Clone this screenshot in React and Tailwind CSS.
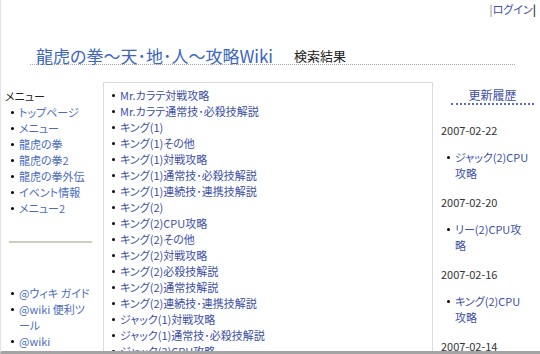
import React from 'react';

const menu = ['トップページ', 'メニュー', '龍虎の拳', '龍虎の拳2', '龍虎の拳外伝', 'イベント情報', 'メニュー2'];
const tools = ['@ウィキ ガイド', '@wiki 便利ツール', '@wiki'];

const results = [
  'Mr.カラテ対戦攻略',
  'Mr.カラテ通常技･必殺技解説',
  'キング(1)',
  'キング(1)その他',
  'キング(1)対戦攻略',
  'キング(1)通常技･必殺技解説',
  'キング(1)連続技･連携技解説',
  'キング(2)',
  'キング(2)CPU攻略',
  'キング(2)その他',
  'キング(2)対戦攻略',
  'キング(2)必殺技解説',
  'キング(2)通常技解説',
  'キング(2)連続技･連携技解説',
  'ジャック(1)対戦攻略',
  'ジャック(1)通常技･必殺技解説',
  'ジャック(2)CPU攻略',
];

// wrapped the way the original narrow column wraps them
const recent = [
  { date: '2007-02-22', lines: ['ジャック(2)CPU', '攻略'] },
  { date: '2007-02-20', lines: ['リー(2)CPU攻', '略'] },
  { date: '2007-02-16', lines: ['キング(2)CPU', '攻略'] },
  { date: '2007-02-14', lines: ['ジャック(1)通常', '技･必殺技解説'] },
];

const font = { fontFamily: '"Noto Sans CJK JP", "Liberation Sans", sans-serif', fontFeatureSettings: '"palt"' };

function Bullet({ children, className = '' }) {
  return (
    <li className={`flex ${className}`}>
      <span className="w-[8px] shrink-0 flex items-start pt-[7px]">
        <span className="block w-[3px] h-[3px] rounded-full bg-black" />
      </span>
      <span className="min-w-0">{children}</span>
    </li>
  );
}

export default function App() {
  return (
    <div className="w-[540px] h-[354px] overflow-hidden bg-white border-l border-[#e4e4e4] border-b-[3px] border-b-[#a4a4a4] text-[#333] text-[11px] leading-[16px]" style={font}>
      {/* header */}
      <div className="flex justify-end pr-[4px] pt-[1px] h-[16px]">
        <span className="text-[#777]">|</span>
        <a className="text-[#3c4ea6]">ログイン</a>
        <span className="text-[#333] font-bold">|</span>
      </div>
      <div className="ml-[29px] w-[485px] mt-[32px] border-b border-dotted border-[#aaa] flex items-end">
        <h1 className="pl-[6px] text-[17px] leading-[16px] text-[#3a66c0]">龍虎の拳～天･地･人～攻略Wiki</h1>
        <span className="ml-[21px] text-[13px] leading-[16px] text-[#222]">検索結果</span>
      </div>

      <div className="flex mt-[17px]">
        {/* left menu */}
        <div className="w-[102px] shrink-0 pt-[6px]">
          <div className="pl-[4px] text-[#222]">メニュー</div>
          <ul className="pl-[10px] text-[#4a6bc0]">
            {menu.map((m) => (
              <Bullet key={m}>{m}</Bullet>
            ))}
          </ul>
          <div className="ml-[8px] w-[83px] h-[2px] bg-[#cfccc2] mt-[25px] mb-[42px]" />
          <ul className="pl-[10px] pr-[10px] text-[#4a6bc0]">
            {tools.map((t) => (
              <Bullet key={t}>{t}</Bullet>
            ))}
          </ul>
        </div>

        {/* search results */}
        <div className="w-[330px] shrink-0 h-[300px] border-l border-t border-r border-[#dcdcdc] pt-[4px] pl-[8px]">
          <ul className="text-[#3c4ea6]">
            {results.map((r) => (
              <Bullet key={r}>{r}</Bullet>
            ))}
          </ul>
        </div>

        {/* recent */}
        <div className="flex-1 pl-[8px] pr-[6px] pt-[5px]">
          <div className="ml-[10px] text-center text-[12px] leading-[16px] text-[#3c4ea6] border-b-2 border-dotted border-[#5a6cc0]">更新履歴</div>
          <div className="pt-[4px]">
            {recent.map((r) => (
              <div key={r.date} className="pt-[13px]">
                <div className="text-[#333]">{r.date}</div>
                <ul className="mt-[11px] pl-[6px] text-[#3c4ea6]">
                  <Bullet>
                    {r.lines.map((l) => (
                      <span key={l} className="block whitespace-nowrap">{l}</span>
                    ))}
                  </Bullet>
                </ul>
              </div>
            ))}
          </div>
        </div>
      </div>
    </div>
  );
}
